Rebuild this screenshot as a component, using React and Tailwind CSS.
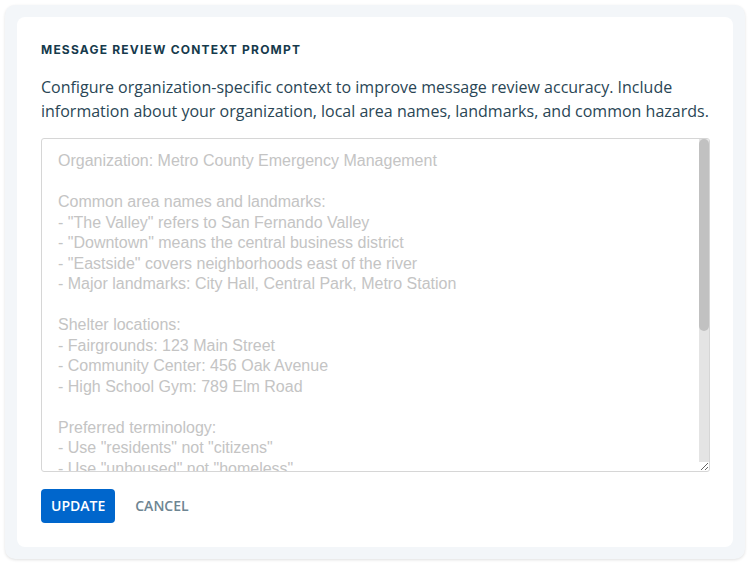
const sample = `Organization: Metro County Emergency Management

Common area names and landmarks:
- "The Valley" refers to San Fernando Valley
- "Downtown" means the central business district
- "Eastside" covers neighborhoods east of the river
- Major landmarks: City Hall, Central Park, Metro Station

Shelter locations:
- Fairgrounds: 123 Main Street
- Community Center: 456 Oak Avenue
- High School Gym: 789 Elm Road

Preferred terminology:
- Use "residents" not "citizens"
- Use "unhoused" not "homeless"
- Use "evacuation zone" not "danger zone"

Common hazards:
- Wildfires in the northern foothills
- Flash flooding along the river after heavy rain
- Earthquakes (all areas)
- Extreme heat in the Valley during summer

Contact info:
- Non-emergency line: (555) 123-4567
- Website: metrocounty.gov/emergency`;

export default function App() {
  return (
    <div className="bg-white p-[5px] pr-[6px] min-h-[563px]">
      <div className="bg-[#f3f6f9] rounded-[10px] p-3 shadow-[0_1px_3px_rgba(0,0,0,0.12)]">
        <div className="bg-white rounded-lg p-6">
          <h2 className="font-['Inter',sans-serif] text-[12px] leading-[18px] font-bold tracking-[0.1em] text-[#163a4c] uppercase">
            Message Review Context Prompt
          </h2>
          <p className="mt-4 font-['Open_Sans',sans-serif] text-[16px] leading-6 text-[#2a4655]">
            Configure organization-specific context to improve message review accuracy. Include
            information about your organization, local area names, landmarks, and common hazards.
          </p>
          <div className="relative mt-[15px] w-[669px]">
            <textarea
              className="block w-full h-[334px] border border-[#d6d6d6] rounded-[3px] pl-4 pr-5 pt-[12px] pb-[11px] font-['Liberation_Sans',Arial,sans-serif] text-[16px] leading-[20.5px] text-[#c4c4c4] outline-none"
              defaultValue={sample}
            />
            {/* scrollbar */}
            <div className="pointer-events-none absolute right-px top-px w-[10px] h-[323px] bg-[#e4e4e4] rounded-tr-[2px]">
              <div className="h-[192px] bg-[#c1c1c1] rounded-[5px]" />
            </div>
          </div>
          <div className="mt-[17px] flex items-center gap-5 font-['Open_Sans',sans-serif]">
            <button className="h-[34px] px-2.5 rounded bg-[#0066cc] text-white text-[14px] font-semibold leading-5 pb-px">
              UPDATE
            </button>
            <button className="h-[34px] text-[#6e8592] text-[14px] font-semibold leading-5 pb-px">
              CANCEL
            </button>
          </div>
        </div>
      </div>
    </div>
  );
}
